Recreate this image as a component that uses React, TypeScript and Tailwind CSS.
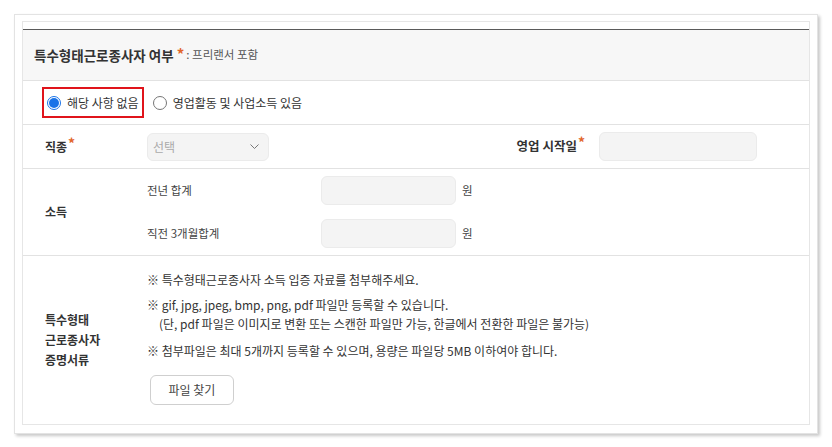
import React from "react";

const F = { fontFamily: '"Noto Sans CJK KR", "Noto Sans", sans-serif' };

function Star() {
  return <span className="text-[#e2662c] text-[14px] leading-none relative top-[-3px] ml-[1px]">*</span>;
}

export default function App() {
  return (
    <div className="w-[832px] h-[447px] bg-white pt-[14px] pl-[14px]" style={F}>
      <div className="w-[804px] h-[420px] border border-[#e3e3e3] shadow-[2px_2px_3px_rgba(0,0,0,0.22)] pt-[6px] pl-[7px] pr-[7px] pb-[9px]">
        <div className="w-[788px] h-[404px] border border-[#e6e6e6] pt-[7px] flex flex-col text-[#333]">
          <div className="border-t border-[#5a5a5a] h-[52px] bg-[#f7f7f7] border-b border-b-[#e2e2e2] flex items-center pl-[11px]">
            <span className="text-[13.5px] font-bold text-[#333]">특수형태근로종사자 여부</span>
            <span className="text-[#e2662c] text-[15px] font-bold ml-[3px] leading-none relative top-[-2px]">*</span>
            <span className="text-[11.5px] text-[#555] ml-[2px]">: 프리랜서 포함</span>
          </div>
          <div className="h-[44px] border-b border-[#e2e2e2] flex items-center pl-[19px]">
            <div className="border-2 border-[#e0141b] h-[31px] flex items-center pl-[3px] pr-[3px]">
              <span className="w-[14px] h-[14px] rounded-full border border-[#1a73e8] flex items-center justify-center">
                <span className="w-[10px] h-[10px] rounded-full bg-[#1a73e8]" />
              </span>
              <span className="text-[12px] ml-[6px]">해당 사항 없음</span>
            </div>
            <span className="w-[14px] h-[14px] rounded-full border border-[#767676] ml-[9px]" />
            <span className="text-[12px] ml-[6px]">영업활동 및 사업소득 있음</span>
          </div>
          <div className="h-[44px] border-b border-[#e2e2e2] flex items-center">
            <div className="w-[124px] pl-[22px] text-[12px] font-bold">직종<Star /></div>
            <div className="w-[122px] h-[28px] rounded-[6px] bg-[#f4f4f4] border border-[#ebebeb] flex items-center justify-between pl-[5px] pr-[9px]">
              <span className="text-[12px] text-[#aaa]">선택</span>
              <svg width="9" height="5" viewBox="0 0 9 5" fill="none">
                <path d="M0.5 0.5l4 4 4-4" stroke="#777" strokeWidth="1" />
              </svg>
            </div>
            <div className="flex-1" />
            <div className="text-[12.5px] font-bold">영업 시작일<Star /></div>
            <div className="w-[158px] h-[29px] rounded-[6px] bg-[#f4f4f4] border border-[#ebebeb] ml-[14px] mr-[52px]" />
          </div>
          <div className="h-[87px] border-b border-[#e2e2e2] flex items-center">
            <div className="w-[124px] pl-[22px] text-[12px] font-bold">소득</div>
            <div className="flex flex-col gap-[14px]">
              <div className="flex items-center">
                <div className="w-[174px] text-[11.5px] text-[#444]">전년 합계</div>
                <div className="w-[135px] h-[29px] rounded-[6px] bg-[#f4f4f4] border border-[#ebebeb]" />
                <span className="text-[11.5px] ml-[6px] text-[#444]">원</span>
              </div>
              <div className="flex items-center">
                <div className="w-[174px] text-[11.5px] text-[#444]">직전 3개월합계</div>
                <div className="w-[135px] h-[29px] rounded-[6px] bg-[#f4f4f4] border border-[#ebebeb]" />
                <span className="text-[11.5px] ml-[6px] text-[#444]">원</span>
              </div>
            </div>
          </div>
          <div className="flex-1 flex items-center">
            <div className="w-[124px] pl-[22px] text-[12px] font-bold leading-[20px]">
              <div>특수형태</div>
              <div>근로종사자</div>
              <div>증명서류</div>
            </div>
            <div className="text-[12px] text-[#333] relative top-[-3px]">
              <div className="leading-[19px]">※ 특수형태근로종사자 소득 입증 자료를 첨부해주세요.</div>
              <div className="leading-[19px] mt-[6px]">※ gif, jpg, jpeg, bmp, png, pdf 파일만 등록할 수 있습니다.</div>
              <div className="leading-[19px] pl-[12px]">(단, pdf 파일은 이미지로 변환 또는 스캔한 파일만 가능, 한글에서 전환한 파일은 불가능)</div>
              <div className="leading-[19px] mt-[8px]">※ 첨부파일은 최대 5개까지 등록할 수 있으며, 용량은 파일당 5MB 이하여야 합니다.</div>
              <button className="mt-[15px] ml-[3px] w-[84px] h-[30px] rounded-[6px] border border-[#cfcfcf] bg-white text-[12px] text-[#444]">파일 찾기</button>
            </div>
          </div>
        </div>
      </div>
    </div>
  );
}
